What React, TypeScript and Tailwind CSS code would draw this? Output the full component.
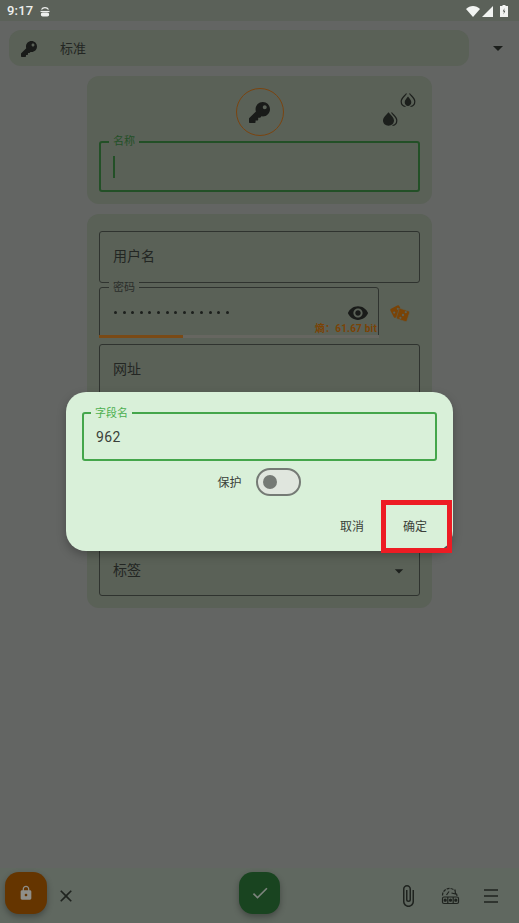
import { FaKey } from "react-icons/fa";
import { MdArrowDropDown, MdAttachFile, MdCheck, MdClose, MdLock, MdVisibility } from "react-icons/md";

const font = { fontFamily: '"Roboto", "Noto Sans CJK SC", sans-serif' };

function Drop({ outlined }: { outlined?: boolean }) {
  return (
    <svg width="16" height="16" viewBox="0 0 16 16" className="text-[#1c1f1c]">
      <path d="M9.500 1.500c1.800 2.500 5.300 4.700 5.300 8 0 2.700-1.800 4.600-4.300 5" fill="none" stroke="currentColor" strokeWidth="1.200" />
      {outlined ? (
        <>
          <path d="M6.500 1.500C4.700 4 1.200 6.200 1.200 9.500c0 2.700 1.800 4.600 4.300 5" fill="none" stroke="currentColor" strokeWidth="1.200" />
          <path d="M8 4.500c1.700 2.200 3.300 3.800 3.300 5.800 0 2-1.500 3.700-3.300 3.700s-3.300-1.700-3.300-3.700c0-2 1.600-3.600 3.300-5.800z" fill="currentColor" />
        </>
      ) : (
        <path d="M6.500 1.200c2.200 3 5.500 5 5.500 8.400 0 3-2.400 5.200-5.500 5.200S1 12.600 1 9.600c0-3.400 3.300-5.400 5.500-8.400z" fill="currentColor" />
      )}
    </svg>
  );
}

function Dice() {
  return (
    <svg width="22" height="19" viewBox="0 0 22 19">
      <rect x="2.500" y="2.500" width="10" height="10" rx="1.500" transform="rotate(-28 7.500 7.500)" fill="#7a4306" />
      <rect x="8.500" y="5.500" width="11" height="11" rx="1.500" transform="rotate(18 14 11)" fill="#7a4306" stroke="#5a6157" strokeWidth="0.600" />
      <circle cx="5.200" cy="8.600" r="1.100" fill="#5a6157" />
      <circle cx="8.800" cy="4.800" r="1.100" fill="#5a6157" />
      <circle cx="14" cy="11" r="1.200" fill="#5a6157" />
      <circle cx="16.800" cy="8.200" r="1.100" fill="#5a6157" />
      <circle cx="11.400" cy="13.800" r="1.100" fill="#5a6157" />
    </svg>
  );
}

function Field({ label, className }: { label: string; className?: string }) {
  return (
    <div className={`flex items-center rounded-[3px] border border-[#2f332f] pb-px pl-[13px] text-[14px] text-[#232623] ${className ?? ""}`}>
      {label}
    </div>
  );
}

function StatusBar() {
  return (
    <div className="flex h-[21px] items-center bg-[#5b6159] pl-[7px] pr-[11px] pt-px text-white">
      <span className="text-[13px] font-medium tracking-[0.2px] text-[#eef0ee]">9:17</span>
      <svg width="10" height="11" viewBox="0 0 10 11" className="ml-[7px]" fill="none" stroke="#eef0ee" strokeWidth="1.200">
        <path d="M1.500 3.500C3 1 7 1 8.500 3.500" />
        <path d="M0.500 5.500h9" />
        <rect x="1.500" y="7" width="7" height="3" rx="1.200" fill="#eef0ee" />
      </svg>
      <div className="ml-auto flex items-center gap-[2px]">
        <svg width="14" height="11" viewBox="0 0 14 11">
          <path d="M0 3 C4 -1 10 -1 14 3 L7 11z" fill="#f2f4f2" />
        </svg>
        <svg width="11" height="11" viewBox="0 0 11 11" className="mr-[5px]">
          <path d="M0 11 L11 0 V11z" fill="#f2f4f2" />
        </svg>
        <svg width="8" height="12" viewBox="0 0 8 12">
          <path d="M2.500 0h3v1H8v11H0V1h2.500z" fill="#f2f4f2" />
          <path d="M4.500 3 L2.800 6.500H4L3.500 9.500 5.300 5.800H4.100z" fill="#4a4f49" />
        </svg>
      </div>
    </div>
  );
}

function SpeedDial() {
  return (
    <svg width="20" height="20" viewBox="0 0 20 20" fill="none" stroke="#1f231f" strokeWidth="1.200">
      <path d="M2.500 9.500a7 7 0 0 1 12-5" strokeDasharray="3 1" />
      <path d="M6.500 9 9 5.500" />
      <path d="M15 3.500 15.500 8 11.500 7" />
      <path d="M16.500 7.500 17 10" />
      <rect x="2.500" y="11" width="16" height="6.500" rx="1.500" />
      <path d="M7.800 11v6.500M13.200 11v6.500" />
      <circle cx="5.200" cy="14.200" r="1" fill="#1f231f" />
      <circle cx="10.500" cy="14.200" r="1" fill="#1f231f" />
      <circle cx="15.800" cy="14.200" r="1" fill="#1f231f" />
    </svg>
  );
}

function MenuLines() {
  return (
    <svg width="16" height="14" viewBox="0 0 16 14" fill="none" stroke="#1f231f" strokeWidth="1.300">
      <path d="M1 1h14M1 7h14M1 13h14" />
    </svg>
  );
}

export default function App() {
  return (
    <div className="relative flex h-[923px] w-[519px] flex-col overflow-hidden bg-[#636563]" style={font}>
      <StatusBar />

      <div className="mt-[9px] flex items-center">
        <div className="ml-[9px] flex h-[36px] w-[460px] items-center rounded-[12px] bg-[#5a6157] pl-[12px] pt-px text-[13px] text-[#232623]">
          <FaKey size={16} className="text-[#191b19]" />
          <span className="ml-[23px]">标准</span>
        </div>
        <MdArrowDropDown size={24} className="ml-[17px] text-[#1c1f1c]" />
      </div>

      <div className="mx-auto mt-[10px] flex w-[345px] flex-col rounded-[12px] bg-[#5a6157] px-[12px] pt-[12px]">
        <div className="grid h-[48px] grid-cols-[1fr_48px_1fr]">
          <div />
          <div className="flex size-[48px] items-center justify-center rounded-full border border-[#7a4410]">
            <FaKey size={21} className="text-[#191b19]" />
          </div>
          <div className="flex flex-col items-end pt-[4px]">
            <div className="mr-[4px]">
              <Drop outlined />
            </div>
            <div className="mr-[22px] mt-[3px]">
              <Drop />
            </div>
          </div>
        </div>
        <div className="relative mb-[12px] mt-[5px] flex h-[51px] items-center rounded-[3px] border-2 border-[#235027] pl-[12px]">
          <span className="absolute -top-[8px] left-[8px] bg-[#5a6157] px-[4px] text-[11px] leading-[14px] text-[#235027]">名称</span>
          <div className="h-[22px] w-[2px] bg-[#235027]" />
        </div>
      </div>

      <div className="mx-auto mt-[10px] flex h-[394px] w-[345px] flex-col rounded-[12px] bg-[#5a6157] px-[12px] pt-[17px]">
        <Field label="用户名" className="h-[52px]" />
        <div className="mt-[4px] flex items-center">
          <div className="relative h-[51px] w-[280px] rounded-[3px] border border-[#2f332f]">
            <span className="absolute -top-[7px] left-[9px] bg-[#5a6157] px-[4px] text-[11px] leading-[14px] text-[#2b2e2b]">密码</span>
            <div className="flex h-full items-start pl-[14px] pt-[23px]">
              <div className="flex gap-[5.600px]">
                {Array.from({ length: 14 }).map((_, i) => (
                  <div key={i} className="size-[3px] rounded-full bg-[#1c1f1c]" />
                ))}
              </div>
            </div>
            <MdVisibility size={22} className="absolute right-[9px] top-[14px] text-[#191b19]" />
            <span className="absolute bottom-[1px] right-[1px] text-[10px] font-bold leading-[14px] tracking-[0.2px] text-[#7a4306]">熵：61.67 bit</span>
            <div className="absolute -bottom-px -left-px -right-px h-[3px] bg-[#666660]">
              <div className="h-full w-[84px] bg-[#7a4a16]" />
            </div>
          </div>
          <div className="ml-[10px] mt-[1px]">
            <Dice />
          </div>
        </div>
        <Field label="网址" className="mt-[6px] h-[52px]" />
        <div className="relative mb-[12px] mt-auto flex h-[52px] items-center rounded-[3px] border border-[#2f332f] pl-[13px] text-[14px] text-[#232623]">
          标签
          <MdArrowDropDown size={20} className="absolute right-[10px] top-[16px] text-[#1c1f1c]" />
        </div>
      </div>

      <div className="mt-auto flex h-[55px] items-center bg-[#606860] pl-[5px]">
        <div className="mb-[5px] flex size-[42px] items-center justify-center rounded-[14px] bg-[#653500] shadow-[0_3px_6px_rgba(0,0,0,0.3)]">
          <MdLock size={16} className="text-[#8f8f8a]" />
        </div>
        <MdClose size={20} className="ml-[9px] text-[#1f231f]" />
        <div className="mb-[5px] ml-[163px] flex h-[42px] w-[41px] items-center justify-center rounded-[14px] bg-[#194420] shadow-[0_3px_6px_rgba(0,0,0,0.3)]">
          <MdCheck size={20} className="text-[#7d847d]" />
        </div>
        <MdAttachFile size={24} className="ml-[116px] text-[#1f231f]" />
        <div className="ml-[20px]">
          <SpeedDial />
        </div>
        <div className="ml-[23px]">
          <MenuLines />
        </div>
      </div>

      <div className="absolute left-[66px] top-[392px] flex h-[159px] w-[387px] flex-col rounded-[20px] bg-[#d9f0d9] px-[16px] pt-[20px] shadow-[0_4px_10px_rgba(0,0,0,0.25)]">
        <div className="relative flex h-[49px] items-center rounded-[3px] border-2 border-[#44a64b] pl-[12px] pt-[2px] text-[14px] tracking-[0.4px] text-[#3a3f3a]">
          <span className="absolute -top-[7px] left-[7px] bg-[#d9f0d9] px-[4px] text-[11px] leading-[14px] tracking-normal text-[#4caf50]">字段名</span>
          962
        </div>
        <div className="mt-[7px] flex items-center justify-center pr-[1px] text-[12px] text-[#3a3f3a]">
          <span className="pt-[2px]">保护</span>
          <div className="ml-[14px] flex h-[28px] w-[45px] items-center rounded-full border-2 border-[#757a75] bg-[#e0e6de] pl-[5px]">
            <div className="size-[14px] rounded-full bg-[#757a75]" />
          </div>
        </div>
        <div className="mt-[20px] flex items-center justify-end pr-[10px] text-[12px] leading-[22px] text-[#3a3f3a]">
          <span>取消</span>
          <span className="ml-[39px]">确定</span>
        </div>
        <div className="absolute left-[315px] top-[108px] h-[53px] w-[71px] border-[5px] border-[#ed1c24]" />
      </div>
    </div>
  );
}
